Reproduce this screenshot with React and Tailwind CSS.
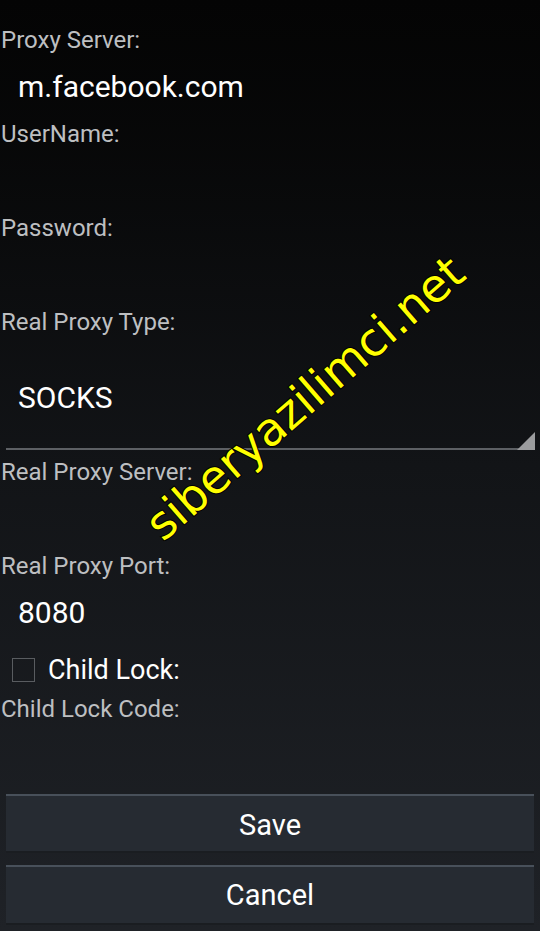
import React from "react";

const Label = ({ children, className = "" }) => (
  <div className={`h-[24px] flex items-center pl-[1px] text-[24px] text-[#bdbfc1] leading-none ${className}`}>
    {children}
  </div>
);

const Field = ({ value }) => (
  <div className="h-[70px] flex items-center pl-[18px] text-[30px] text-white leading-none">
    {value}
  </div>
);

export default function App() {
  return (
    <div
      className="relative w-[540px] h-[931px] overflow-hidden bg-gradient-to-b from-[#040404] via-[#121417] to-[#1f2227]"
      style={{ fontFamily: "Roboto, 'Noto Sans', sans-serif" }}
    >
      <div className="pt-[28px] flex flex-col">
        <Label>Proxy Server:</Label>
        <Field value="m.facebook.com" />
        <Label>UserName:</Label>
        <Field value="" />
        <Label>Password:</Label>
        <Field value="" />
        <Label>Real Proxy Type:</Label>
        <div className="h-[126px] flex flex-col">
          <div className="flex-1 flex items-center pl-[18px] text-[30px] text-white leading-none pt-[14px]">
            SOCKS
          </div>
          <div className="relative mx-[6px] mb-[10px] h-[2px] bg-[#5d6064]">
            <div className="absolute right-[-1px] bottom-0 w-0 h-0 border-l-[18px] border-l-transparent border-b-[18px] border-b-[#9b9c9e]" />
          </div>
        </div>
        <Label>Real Proxy Server:</Label>
        <Field value="" />
        <Label>Real Proxy Port:</Label>
        <Field value="8080" />
        <div className="h-[44px] flex items-center">
          <div className="ml-[12px] w-[23px] h-[24px] border-[1.5px] border-[#595c60]" />
          <div className="ml-[13px] text-[27px] text-white leading-none">Child Lock:</div>
        </div>
        <Label className="mt-[5px]">Child Lock Code:</Label>
        <Field value="" />
        <div className="mt-[3px] px-[6px] flex flex-col gap-[12px]">
          <button className="h-[59px] w-full bg-[#262b32] border-t-[2px] border-t-[#48505a] border-b-[2px] border-b-[#1a1d21] text-white text-[29px] leading-none flex items-center justify-center pt-[3px]">
            Save
          </button>
          <button className="h-[60px] w-full bg-[#262b32] border-t-[2px] border-t-[#48505a] border-b-[2px] border-b-[#1a1d21] text-white text-[29px] leading-none flex items-center justify-center">
            Cancel
          </button>
        </div>
      </div>
      <div
        className="absolute left-[305px] top-[398px] -translate-x-1/2 -translate-y-1/2 -rotate-[41deg] whitespace-nowrap text-[46px] leading-none text-[#ffff00]"
        style={{ fontFamily: "'DejaVu Sans', sans-serif", WebkitTextStroke: "2px #000", paintOrder: "stroke fill" }}
      >
        siberyazilimci.net
      </div>
    </div>
  );
}
